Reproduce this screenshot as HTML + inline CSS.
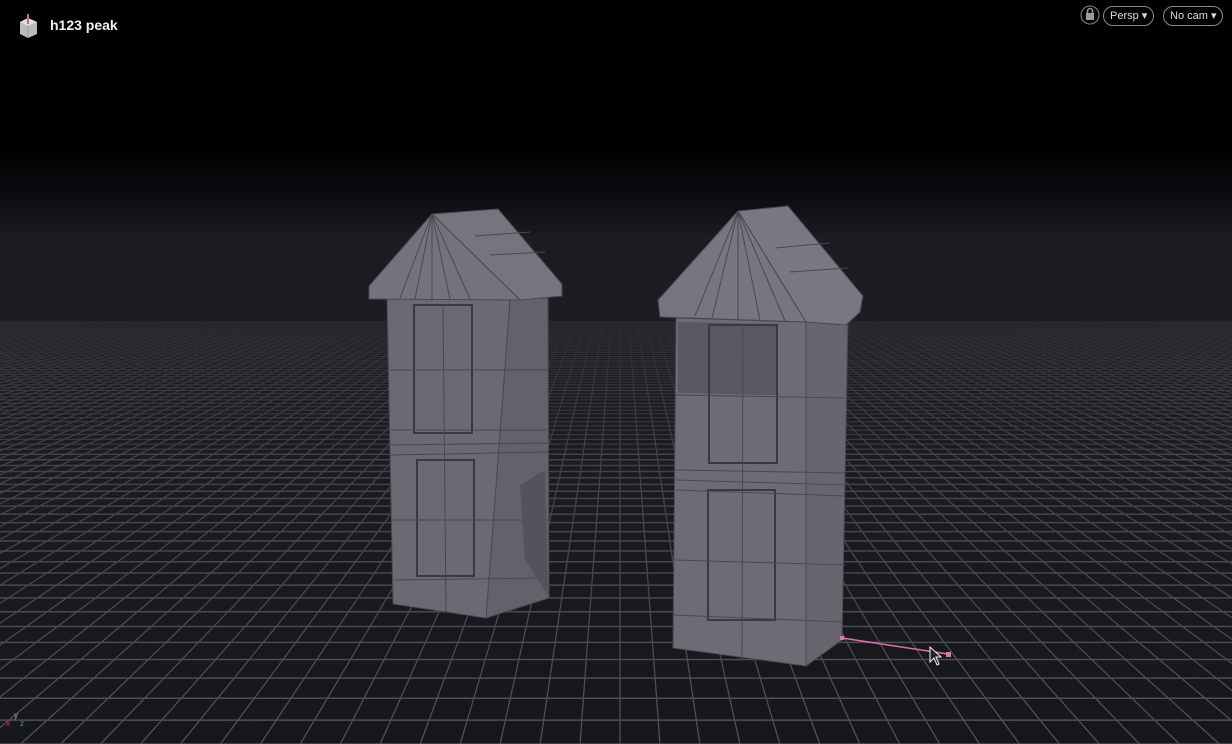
<!DOCTYPE html><html><head><style>
html,body{margin:0;padding:0;background:#000;overflow:hidden}
body{width:1232px;height:744px;position:relative;font-family:"Liberation Sans",sans-serif}
.t{position:absolute;left:50px;top:17px;color:#f2f2f2;font-weight:bold;font-size:14px}
.pill{position:absolute;top:6px;height:18px;border:1px solid #8a8a8a;border-radius:10px;color:#ddd;font-size:11px;line-height:18px;padding:0 6px;box-sizing:content-box}
</style></head><body>
<svg width="1232" height="744" style="position:absolute;left:0;top:0">
<defs>
<linearGradient id="sky" x1="0" y1="0" x2="0" y2="744" gradientUnits="userSpaceOnUse">
<stop offset="0" stop-color="#000"/><stop offset="0.2" stop-color="#000"/><stop offset="0.27" stop-color="#0c0e12"/><stop offset="0.32" stop-color="#1a1c22"/><stop offset="0.5" stop-color="#1c1e23"/><stop offset="1" stop-color="#16171b"/>
</linearGradient>
<linearGradient id="mg" x1="0" y1="0" x2="0" y2="744" gradientUnits="userSpaceOnUse">
<stop offset="0.38" stop-color="#fff" stop-opacity="0"/><stop offset="0.45" stop-color="#fff" stop-opacity="0.3"/><stop offset="0.6" stop-color="#fff" stop-opacity="0.7"/><stop offset="1" stop-color="#fff" stop-opacity="1"/>
</linearGradient>
<mask id="m"><rect width="1232" height="744" fill="url(#mg)"/></mask>
</defs>
<rect width="1232" height="744" fill="url(#sky)"/>
<g id="grid" mask="url(#m)"></g>
<g stroke="#4a4850" stroke-width="1">
<polygon points="510,300 548,298 549,598 486,618" fill="#64616b"/>
<polygon points="387,298 510,300 486,618 393,604" fill="#6c6974"/>
<polygon points="432,214 498,209 562,284 562,296 520,300" fill="#77747f"/>
<polygon points="369,286 432,214 520,300 369,299" fill="#75727d"/>
<path d="M432,214 L400,298 M432,214 L415,299 M432,214 L432,299 M432,214 L450,299 M432,214 L470,299 M475,236 L530,232 M490,255 L545,252" fill="none"/>
<rect x="414" y="305" width="58" height="128" fill="none" stroke="#3a3840" stroke-width="2"/>
<rect x="417" y="460" width="57" height="116" fill="none" stroke="#3a3840" stroke-width="2"/>
<line x1="389" y1="430" x2="548" y2="430"/><line x1="389" y1="445" x2="548" y2="443"/><line x1="390" y1="455" x2="548" y2="452"/>
<line x1="443" y1="305" x2="446" y2="612"/><line x1="390" y1="370" x2="548" y2="370"/><line x1="392" y1="520" x2="548" y2="520"/><line x1="392" y1="580" x2="548" y2="578"/>
<polygon points="520,485 545,470 548,595 525,560" fill="#55525b" stroke="none"/>
</g>
<g stroke="#4a4850" stroke-width="1">
<polygon points="806,322 848,318 842,640 806,666" fill="#68656f"/>
<polygon points="676,318 806,322 806,666 673,648" fill="#6e6b76"/>
<polygon points="738,211 788,206 863,296 860,312 846,325 806,322" fill="#7a7782"/>
<polygon points="658,300 738,211 806,322 660,317" fill="#78757f"/>
<path d="M738,211 L695,316 M738,211 L712,318 M738,211 L738,320 M738,211 L760,320 M738,211 L785,321 M775,248 L830,243 M790,272 L848,268" fill="none"/>
<polygon points="678,322 778,324 778,395 678,393" fill="#5a5760" stroke="none"/>
<rect x="709" y="325" width="68" height="138" fill="none" stroke="#3a3840" stroke-width="2"/>
<rect x="708" y="490" width="67" height="130" fill="none" stroke="#3a3840" stroke-width="2"/>
<line x1="743" y1="325" x2="742" y2="660"/><line x1="676" y1="395" x2="845" y2="398"/><line x1="675" y1="560" x2="845" y2="565"/><line x1="674" y1="615" x2="843" y2="622"/>
<line x1="676" y1="470" x2="845" y2="473"/><line x1="676" y1="480" x2="845" y2="485"/><line x1="676" y1="490" x2="845" y2="496"/>
</g>
<line x1="842" y1="638" x2="948" y2="654" stroke="#e070b0" stroke-width="1.5"/>
<rect x="840" y="636" width="4" height="4" fill="#e070b0"/><rect x="946" y="652" width="5" height="5" fill="#e070b0"/>
<path d="M930 647 L930 662 L934 658 L937 665 L939 664 L936 657 L941 657 Z" fill="#222" stroke="#eee" stroke-width="1"/>
<polygon points="20,22 28,18 37,22 37,34 28,38 20,34" fill="#bbb"/><polygon points="20,22 28,26 37,22 28,18" fill="#ddd"/>
<line x1="28" y1="26" x2="28" y2="38" stroke="#999"/>
<line x1="28" y1="14" x2="28" y2="24" stroke="#e05a8a" stroke-width="2"/>
<text x="6" y="726" fill="#c03050" font-size="9" font-family="Liberation Sans">x</text>
<text x="14" y="718" fill="#9a9" font-size="8" font-family="Liberation Sans">y</text>
<text x="20" y="726" fill="#58a" font-size="8" font-family="Liberation Sans">z</text>
<circle cx="1090" cy="15" r="9" fill="none" stroke="#888"/>
<rect x="1086" y="13" width="8" height="7" fill="#999"/><path d="M1087.5 13 V11 a2.5 2.5 0 0 1 5 0 V13" fill="none" stroke="#999" stroke-width="1.5"/>
</svg>
<div class="t">h123 peak</div>
<div class="pill" style="left:1103px">Persp ▾</div>
<div class="pill" style="left:1163px">No cam ▾</div>
<script>
var g=document.getElementById('grid'),s='',hz=205,C=11600,f=860,vx=620,z0=C/539,zf=100,yf=hz+C/zf;
for(var z=z0;z<=zf;z+=1){var y=hz+C/z;s+='<line x1="0" x2="1232" y1="'+y.toFixed(1)+'" y2="'+y.toFixed(1)+'" stroke="#505257" stroke-width="'+(y>450?1.5:1)+'"/>';}
for(var i=-400;i<=400;i++){var xb=vx+i*f/z0,xt=vx+i*f/zf;if(xt<-50||xt>1300)continue;s+='<line x1="'+xt.toFixed(1)+'" y1="'+yf.toFixed(1)+'" x2="'+xb.toFixed(1)+'" y2="744" stroke="#505257" stroke-width="1.3"/>';}
g.innerHTML=s;
</script>
</body></html>
